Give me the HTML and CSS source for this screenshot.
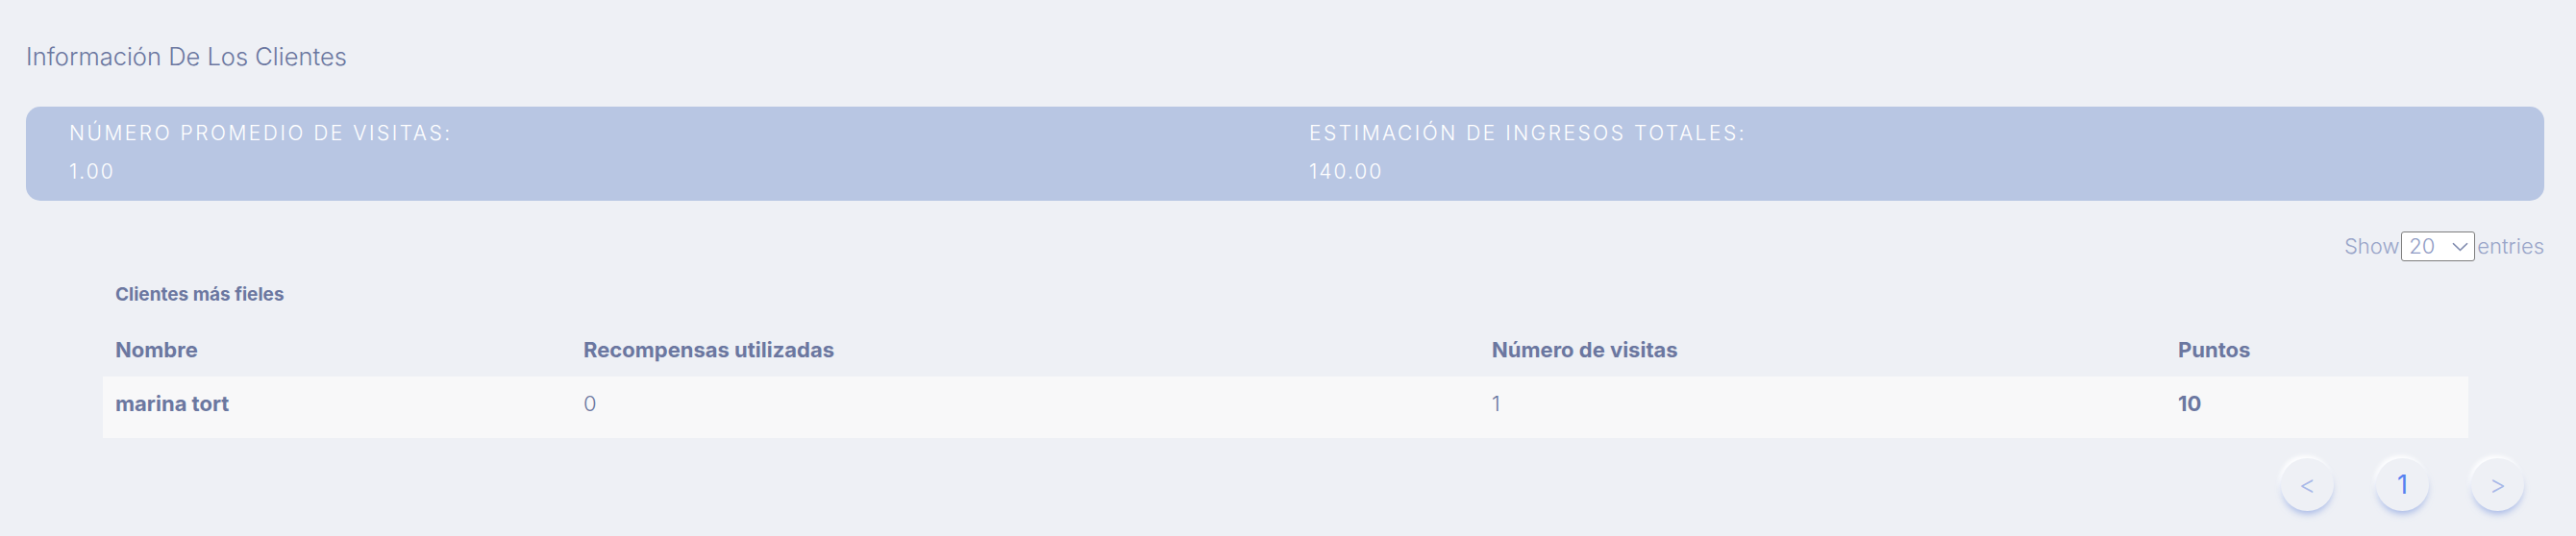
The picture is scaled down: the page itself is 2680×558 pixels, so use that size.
FILE: index.html
```html
<!DOCTYPE html>
<html lang="es">
<head>
<meta charset="utf-8">
<title>Información De Los Clientes</title>
<link rel="stylesheet" href="styles.css">
</head>
<body>
<main class="page">
  <h1 class="page-title">Información De Los Clientes</h1>

  <section class="stats">
    <div class="stat">
      <div class="stat-label">NÚMERO PROMEDIO DE VISITAS:</div>
      <div class="stat-value">1.00</div>
    </div>
    <div class="stat">
      <div class="stat-label">ESTIMACIÓN DE INGRESOS TOTALES:</div>
      <div class="stat-value">140.00</div>
    </div>
  </section>

  <div class="entries">
    <span>Show</span>
    <span class="select">
      <span class="select-value">20</span>
      <svg class="select-chevron" width="17" height="10" viewBox="0 0 17 10"><path d="M1 1.2 L8.5 8.5 L16 1.2" fill="none" stroke="#7f8aae" stroke-width="1.6"/></svg>
    </span>
    <span>entries</span>
  </div>

  <section class="table-wrap">
    <div class="table-caption">Clientes más fieles</div>
    <table class="clients">
      <colgroup>
        <col class="c1"><col class="c2"><col class="c3"><col class="c4">
      </colgroup>
      <thead>
        <tr>
          <th>Nombre</th>
          <th>Recompensas utilizadas</th>
          <th>Número de visitas</th>
          <th>Puntos</th>
        </tr>
      </thead>
      <tbody>
        <tr>
          <td class="strong">marina tort</td>
          <td>0</td>
          <td>1</td>
          <td class="strong">10</td>
        </tr>
      </tbody>
    </table>
  </section>

  <nav class="pager">
    <button class="page-btn arrow">&lt;</button>
    <button class="page-btn current">1</button>
    <button class="page-btn arrow">&gt;</button>
  </nav>
</main>
</body>
</html>
```

FILE: styles.css
```css
* { box-sizing: border-box; }

html, body {
  margin: 0;
  padding: 0;
  background: #eef0f5;
  font-family: "Inter", "Noto Sans", sans-serif;
  color: #6b77a0;
}

.page {
  padding: 43px 33px 0 27px;
  height: 558px;
  overflow: hidden;
}

.page-title {
  margin: 0;
  font-size: 25.5px;
  line-height: 32px;
  font-weight: 300;
  color: #6b77a0;
}

.stats {
  margin-top: 36px;
  height: 98px;
  background: #b8c6e3;
  border-radius: 15px;
  padding: 8px 0 10px 45px;
  display: grid;
  grid-template-columns: 1fr 1fr;
  column-gap: 5px;
  color: #fff;
}

.stat-label,
.stat-value {
  font-size: 21px;
  line-height: 40px;
  font-weight: 300;
  letter-spacing: 2.5px;
  white-space: nowrap;
}

.stat-value { letter-spacing: 2px; }

.entries {
  margin-top: 32px;
  display: flex;
  justify-content: flex-end;
  align-items: center;
  gap: 2px;
  font-size: 22px;
  line-height: 31px;
  font-weight: 300;
  color: #98a4c8;
}

.select {
  width: 77px;
  height: 31px;
  background: #fff;
  border: 1px solid #7d7d7d;
  border-radius: 3px;
  display: flex;
  align-items: center;
  justify-content: space-between;
  padding: 0 6px 0 7px;
}

.select-value { color: #8f9bc4; line-height: 29px; }

.select-chevron { display: block; }

.table-wrap {
  margin: 24px 79px 0 80px;
}

.table-caption {
  padding-left: 13px;
  font-size: 19px;
  line-height: 22px;
  font-weight: 700;
  color: #6b77a0;
}

.clients {
  width: 100%;
  border-collapse: collapse;
  table-layout: fixed;
}

.clients col.c1 { width: 487px; }
.clients col.c2 { width: 945px; }
.clients col.c3 { width: 714px; }
.clients col.c4 { width: 315px; }

.clients th {
  text-align: left;
  padding: 33px 13px 15px;
  font-size: 22px;
  line-height: 26px;
  font-weight: 700;
  color: #6b77a0;
  white-space: nowrap;
}

.clients tbody tr { background: #f8f8f9; }

.clients td {
  padding: 15px 13px 23px;
  font-size: 22px;
  line-height: 26px;
  font-weight: 300;
  color: #6b77a0;
  white-space: nowrap;
}

.clients td.strong { font-weight: 700; }

.pager {
  margin-top: 21px;
  display: flex;
  justify-content: flex-end;
  gap: 44px;
  padding-right: 21px;
}

.page-btn {
  width: 55px;
  height: 55px;
  border-radius: 50%;
  border: none;
  background: #eef0f5;
  font-family: "Inter", "Noto Sans", sans-serif;
  font-size: 27px;
  font-weight: 300;
  line-height: 55px;
  padding: 0;
  box-shadow: 0 5px 7px -2px rgba(120, 148, 222, 0.6), -2px -3px 4px rgba(255, 255, 255, 0.95);
}

.page-btn.arrow { color: #a9b9e8; }
.page-btn.current { color: #5680f0; font-weight: 400; }
```
